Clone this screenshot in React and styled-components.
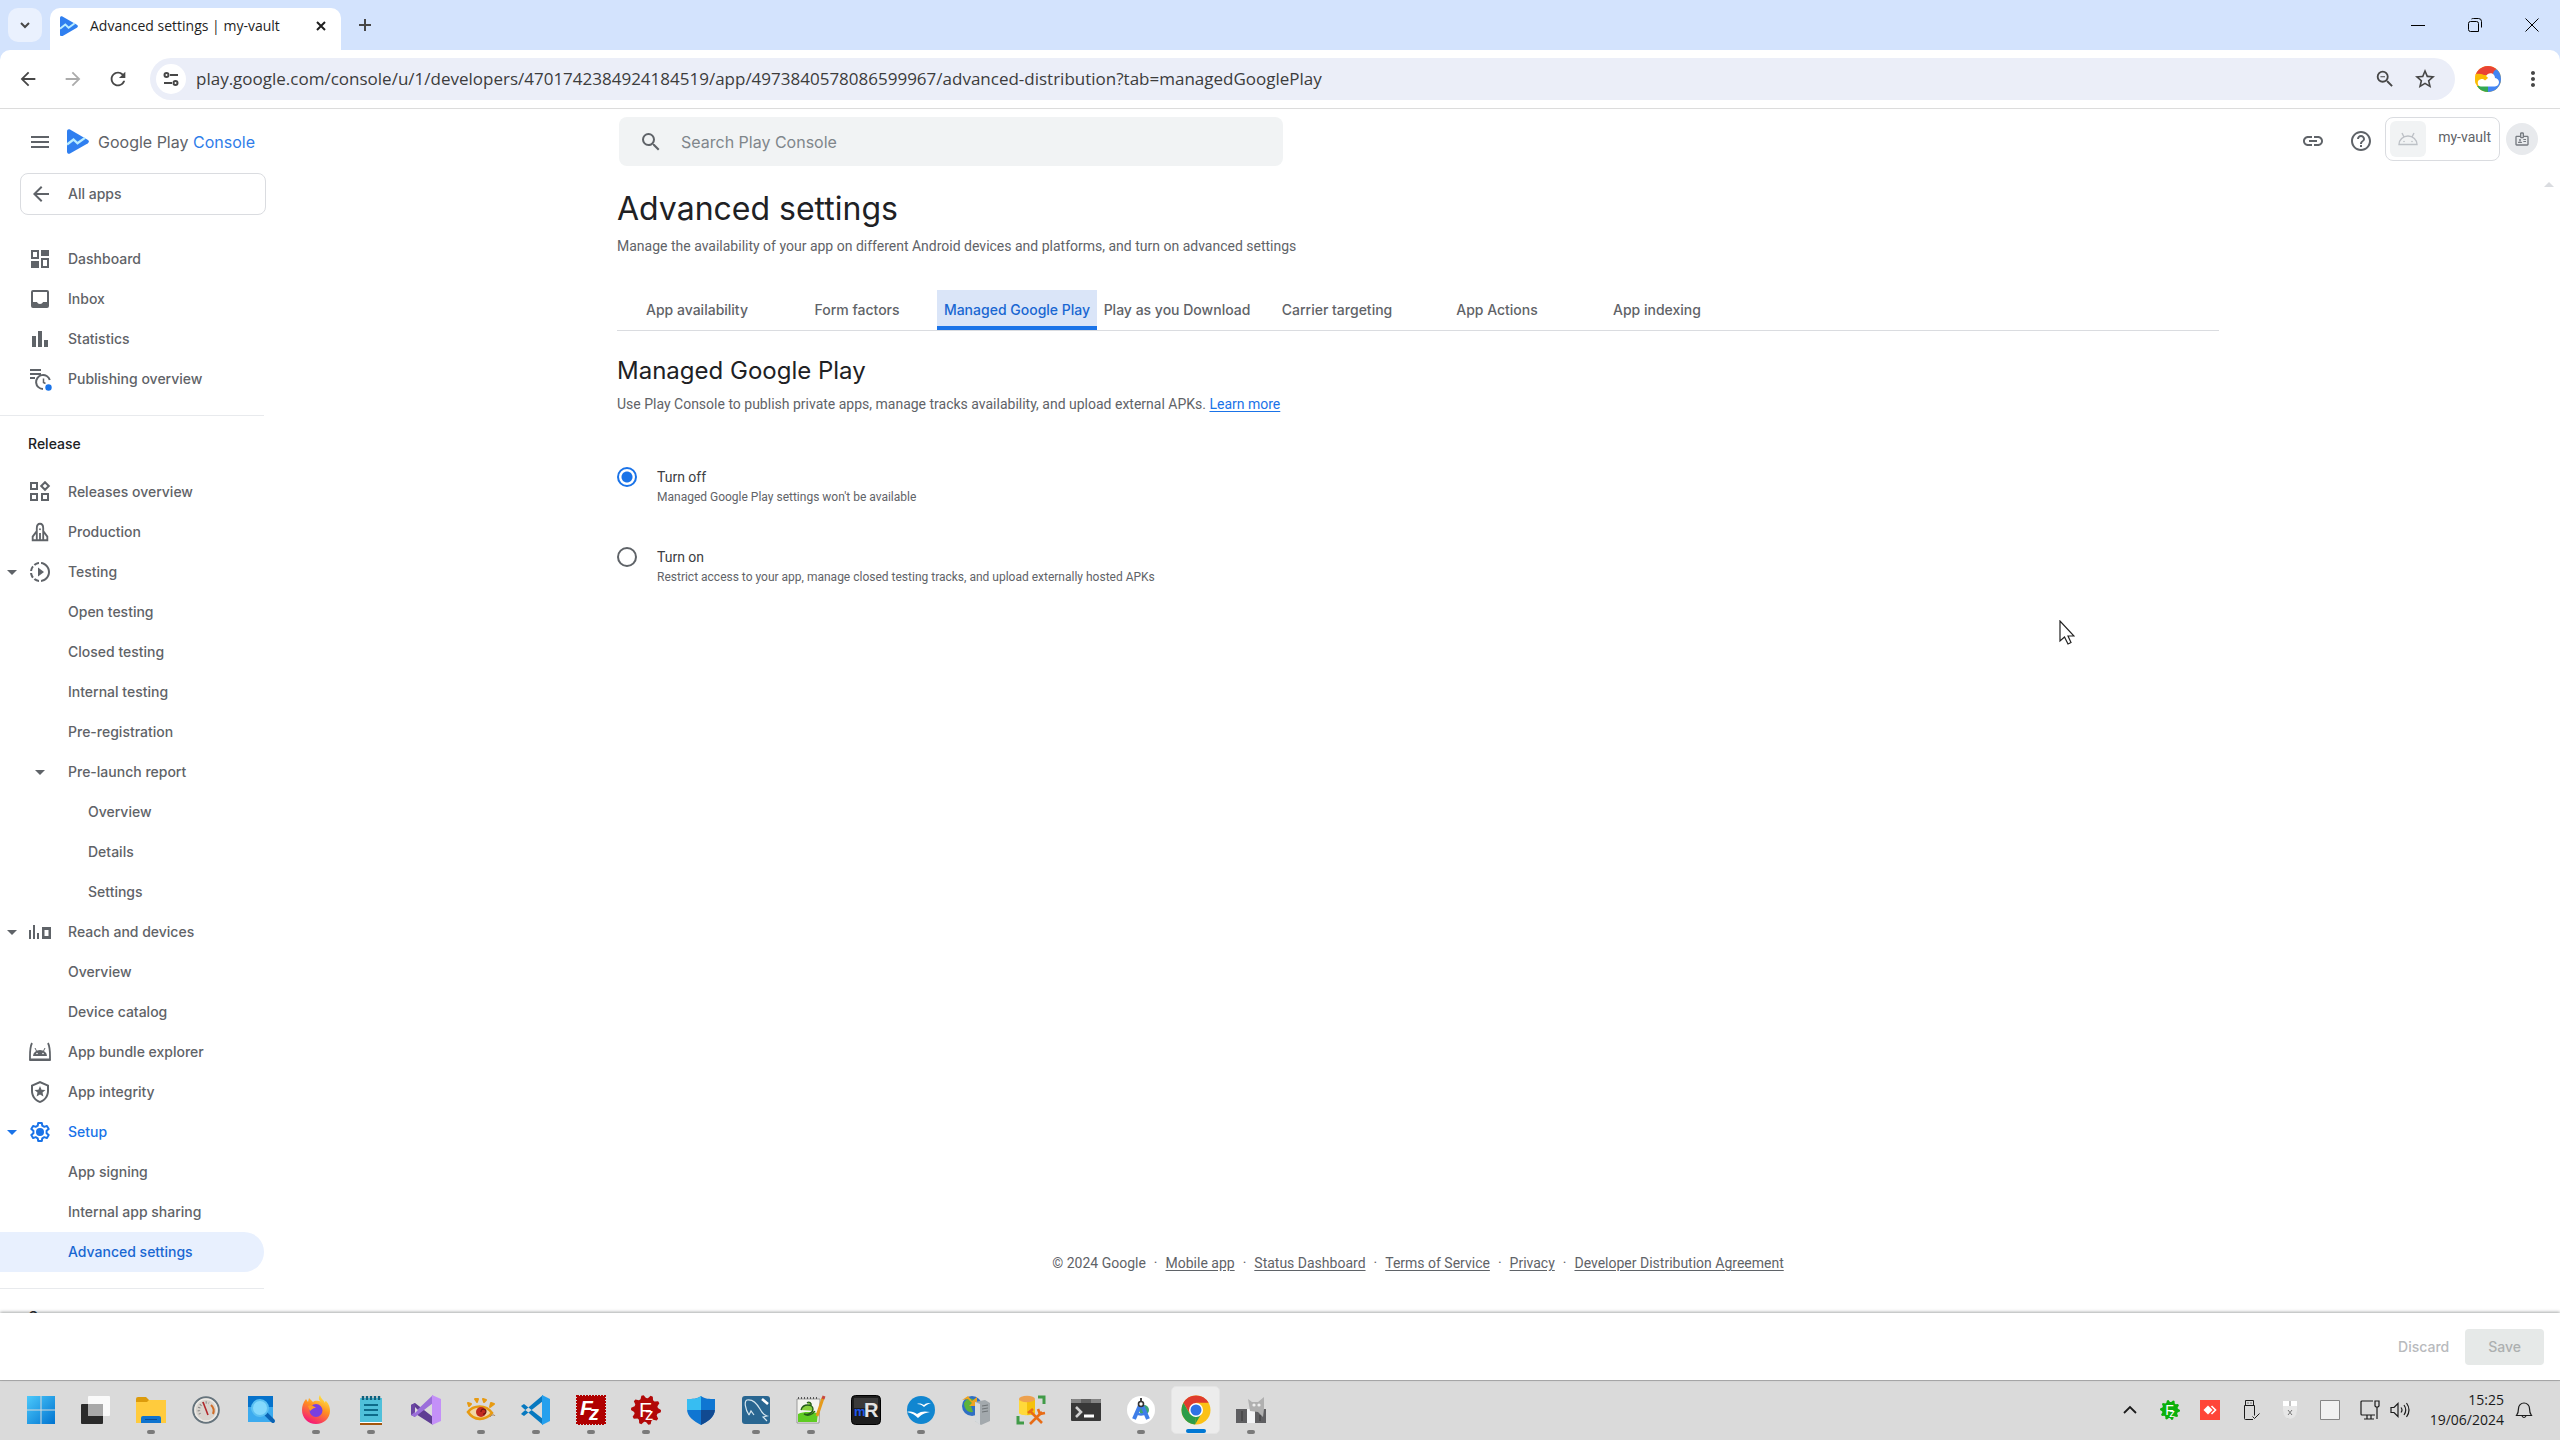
import React, { useState } from 'react';
import styled, { createGlobalStyle, css } from 'styled-components';
import {
  MdArrowBack,
  MdArrowDropDown,
  MdArrowForward,
  MdHelpOutline,
  MdLink,
  MdMenu,
  MdMoreVert,
  MdOutlineBadge,
  MdOutlineLocalPolice,
  MdOutlineSlowMotionVideo,
  MdRefresh,
  MdSearch,
  MdStarOutline,
  MdZoomOut,
} from 'react-icons/md';

const GlobalStyle = createGlobalStyle`
  * {
    box-sizing: border-box;
  }

  body {
    margin: 0;
    background: #fff;
    color: #5f6368;
    font-family: Roboto, "Liberation Sans", sans-serif;
    font-size: 14px;
    line-height: 20px;
  }

  button,
  input {
    font: inherit;
  }

  svg {
    display: block;
    flex: none;
  }
`;

const productFont = css`
  font-family: Inter, "Liberation Sans", sans-serif;
`;

const systemFont = css`
  font-family: "Open Sans", "Noto Sans", sans-serif;
`;

const Screen = styled.div`
  display: flex;
  flex-direction: column;
  height: 100vh;
  overflow: hidden;
`;

const IconButton = styled.button`
  display: flex;
  align-items: center;
  justify-content: center;
  width: ${(props) => props.$size || 32}px;
  height: ${(props) => props.$size || 32}px;
  padding: 0;
  border: none;
  border-radius: ${(props) => props.$radius || '50%'};
  background: ${(props) => props.$bg || 'transparent'};
  color: ${(props) => props.$color || '#474747'};
  cursor: pointer;
`;

/* ---------- browser ---------- */

const TabStrip = styled.div`
  display: flex;
  align-items: flex-end;
  height: 50px;
  padding-left: 8px;
  background: #d3e3fd;
`;

const TabSearch = styled(IconButton)`
  margin-bottom: 8px;
`;

const BrowserTab = styled.div`
  display: flex;
  align-items: center;
  width: 291px;
  height: 42px;
  margin-left: 8px;
  padding: 0 6px 6px 10px;
  border-radius: 10px 10px 0 0;
  background: #fff;
  color: #1f1f1f;
  ${systemFont}
`;

const TabTitle = styled.span`
  flex: 1;
  margin-left: 12px;
  white-space: nowrap;
`;

const NewTab = styled(IconButton)`
  margin: 0 auto 9px 8px;
`;

const WindowButton = styled.button`
  display: flex;
  align-items: center;
  justify-content: center;
  width: 57px;
  height: 50px;
  padding: 0;
  border: none;
  background: none;
`;

const Toolbar = styled.div`
  background: #d3e3fd;
`;

const ToolbarInner = styled.div`
  display: flex;
  align-items: center;
  height: 59px;
  padding: 0 11px;
  border-bottom: 1px solid #dcdcdc;
  border-radius: 10px 10px 0 0;
  background: #fff;
`;

const NavButtons = styled.div`
  display: flex;
  gap: 11px;
  margin-right: 15px;
`;

const Omnibox = styled.div`
  display: flex;
  flex: 1;
  align-items: center;
  height: 42px;
  padding: 0 14px 0 6px;
  border-radius: 21px;
  background: #ebeef8;
`;

const UrlInput = styled.input`
  flex: 1;
  min-width: 0;
  margin-left: 10px;
  padding: 0;
  border: none;
  outline: none;
  background: none;
  color: #3c3c3c;
  font-size: 17px;
  ${systemFont}
`;

const OmniboxActions = styled.div`
  display: flex;
  gap: 8px;
`;

const ProfileArea = styled.div`
  display: flex;
  align-items: center;
  gap: 16px;
  margin-left: 20px;
`;

/* ---------- console ---------- */

const ConsoleHeader = styled.header`
  display: grid;
  grid-template-columns: 280px 1fr;
  height: 64px;
`;

const Brand = styled.div`
  display: flex;
  align-items: center;
  padding-left: 24px;
  color: #5f6368;
  font-size: 16px;
  ${productFont}

  span {
    color: #2f7de9;
  }
`;

const MenuButton = styled(IconButton)`
  margin-right: 11px;
`;

const BrandText = styled.div`
  margin-left: 9px;
  white-space: nowrap;
`;

const HeaderMain = styled.div`
  display: grid;
  grid-template-columns: 1fr minmax(0, 1602px) 1fr;
  padding-right: 4px;
`;

const SearchBox = styled.label`
  display: flex;
  grid-column: 2;
  align-items: center;
  width: 664px;
  max-width: 100%;
  height: 49px;
  margin: 8px 2px;
  padding: 0 20px;
  border-radius: 8px;
  background: #f1f3f4;
`;

const SearchInput = styled.input`
  flex: 1;
  margin-left: 18px;
  padding: 0;
  border: none;
  outline: none;
  background: none;
  font-size: 16px;
  ${productFont}

  &::placeholder {
    color: #80868b;
    opacity: 1;
  }
`;

const HeaderActions = styled.div`
  display: flex;
  align-items: center;
  justify-content: flex-end;
  padding: 0 18px 6px 0;
`;

const HeaderTools = styled.div`
  display: flex;
  gap: 16px;
  margin-right: 8px;
  padding-top: 4px;
`;

const AppChip = styled.button`
  display: flex;
  align-items: center;
  gap: 12px;
  height: 44px;
  margin-right: 6px;
  padding: 0 8px 0 4px;
  border: 1px solid #dadce0;
  border-radius: 8px;
  background: #fff;
  color: #5f6368;
`;

const AppName = styled.span`
  padding-bottom: 4px;
`;

const AppThumb = styled.span`
  display: flex;
  align-items: center;
  justify-content: center;
  width: 36px;
  height: 36px;
  border-radius: 6px;
  background: #f1f3f4;
  color: #bdc1c6;
`;

const Body = styled.div`
  position: relative;
  display: grid;
  flex: 1;
  grid-template-columns: 280px 1fr;
  min-height: 0;
`;

const Sidebar = styled.nav`
  overflow: hidden;
  font-weight: 500;
  ${productFont}
`;

const AllApps = styled.a`
  display: flex;
  align-items: center;
  gap: 15px;
  height: 42px;
  margin: 0 14px 24px 20px;
  padding-left: 8px;
  border: 1px solid #dadce0;
  border-radius: 8px;
  color: #5f6368;
  text-decoration: none;
`;

const NavList = styled.ul`
  margin: 0 16px 16px 0;
  padding: 0;
  list-style: none;
`;

const NavLink = styled.a`
  display: grid;
  grid-template-columns: 24px 32px 1fr;
  align-items: center;
  height: 40px;
  border-radius: 0 20px 20px 0;
  background: ${(props) => (props.$current ? '#e8f0fe' : 'transparent')};
  color: ${(props) => (props.$active ? '#1a73e8' : props.$current ? '#1967d2' : '#5f6368')};
  text-decoration: none;
  white-space: nowrap;
`;

const NavSlot = styled.span`
  display: flex;
  justify-content: center;
`;

const NavText = styled.span`
  padding-left: ${(props) => (props.$deep ? 32 : 12)}px;
`;

const NavSection = styled.h3`
  margin: 0 16px 8px 0;
  padding: 8px 0 0 28px;
  border-top: 1px solid #e8eaed;
  color: #202124;
  font-size: 14px;
  font-weight: 500;
  line-height: 40px;
`;

const Main = styled.main`
  display: flex;
  flex-direction: column;
  align-items: center;
  padding: 16px 4px 40px 0;
`;

const Content = styled.div`
  flex: 1;
  width: 100%;
  max-width: 1602px;
`;

const Title = styled.h1`
  margin: 0 0 7px;
  color: #202124;
  font-size: 32px;
  font-weight: 400;
  line-height: 40px;
  ${productFont}
`;

const Subtitle = styled.h2`
  margin: 24px 0 7px;
  color: #202124;
  font-size: 24px;
  font-weight: 400;
  line-height: 32px;
  ${productFont}
`;

const Text = styled.p`
  margin: 0;
`;

const Link = styled.a`
  color: ${(props) => props.$color || '#1a73e8'};
  text-decoration: underline;
  text-underline-offset: 2px;
`;

const Tabs = styled.div`
  display: flex;
  margin-top: 34px;
  border-bottom: 1px solid #dadce0;
`;

const Tab = styled.button`
  width: 160px;
  height: 40px;
  padding: 4px 0 0;
  border: none;
  border-bottom: 4px solid ${(props) => (props.$selected ? '#1a73e8' : 'transparent')};
  background: ${(props) => (props.$selected ? '#dae5f8' : 'transparent')};
  color: ${(props) => (props.$selected ? '#1967d2' : '#5f6368')};
  font-weight: 500;
  white-space: nowrap;
  cursor: pointer;
  ${productFont}
`;

const RadioGroup = styled.div`
  display: grid;
  gap: 40px;
  margin-top: 53px;
`;

const RadioRow = styled.label`
  display: grid;
  grid-template-columns: 20px 1fr;
  column-gap: 20px;
  color: #3c4043;
  cursor: pointer;
`;

const Radio = styled.input`
  width: 20px;
  height: 20px;
  margin: 0;
  border: 2px solid #5f6368;
  border-radius: 50%;
  appearance: none;

  &:checked {
    border-color: #1a73e8;
    background: radial-gradient(circle, #1a73e8 5px, transparent 6px);
  }
`;

const RadioHint = styled.span`
  grid-column: 2;
  color: #5f6368;
  font-size: 12px;
`;

const Footer = styled.footer`
  display: flex;
  gap: 8px;
`;

const ScrollArrow = styled.span`
  position: absolute;
  top: 9px;
  right: 6px;
  border: 5px solid transparent;
  border-top: none;
  border-bottom-color: #dadce0;
`;

const ActionBar = styled.div`
  z-index: 1;
  display: flex;
  align-items: center;
  justify-content: flex-end;
  gap: 16px;
  height: 67px;
  padding-right: 16px;
  background: #fff;
  box-shadow: 0 -1px 3px rgba(60, 64, 67, 0.45);
`;

const ActionButton = styled.button`
  height: 36px;
  padding: 0 ${(props) => (props.$filled ? 23 : 0)}px;
  border: none;
  border-radius: 4px;
  background: ${(props) => (props.$filled ? '#e6e9e8' : 'transparent')};
  color: ${(props) => (props.$filled ? '#adb0b0' : '#b8babd')};
  font-weight: 500;
  ${productFont}
`;

const MouseCursor = styled.svg`
  position: absolute;
  top: 447px;
  left: 2059px;
`;

/* ---------- taskbar ---------- */

const TaskbarRow = styled.div`
  display: flex;
  align-items: center;
  justify-content: space-between;
  height: 60px;
  padding: 0 27px 2px 13px;
  border-top: 1px solid #aeaeae;
  background: #dadada;
  color: #1b1b1b;
`;

const TaskApps = styled.div`
  display: flex;
`;

const TaskButton = styled.button`
  position: relative;
  display: flex;
  align-items: center;
  justify-content: center;
  width: 49px;
  height: 48px;
  margin: 0 3px;
  padding: 0;
  border: ${(props) => (props.$active ? '1px solid #e4e4e4' : 'none')};
  border-radius: 5px;
  background: ${(props) => (props.$active ? '#ececec' : 'transparent')};

  &::after {
    content: '';
    position: absolute;
    bottom: 0;
    width: ${(props) => (props.$active ? 20 : 8)}px;
    height: 4px;
    border-radius: 2px;
    background: ${(props) => (props.$active ? '#0078d4' : props.$open ? '#7a7a7a' : 'transparent')};
  }
`;

const Tray = styled.div`
  display: flex;
  align-items: center;
  gap: 20px;
`;

const TrayPair = styled.div`
  display: flex;
  gap: 10px;
`;

const Clock = styled.div`
  text-align: right;
  ${systemFont}
`;

const TrayEnd = styled.div`
  display: flex;
  align-items: center;
  gap: 11px;
`;

/* ---------- drawings ---------- */

const PlayLogo = ({ size }) => (
  <svg width={size} height={size * 25 / 22} viewBox="0 0 22 25">
    <path d="M0 2.2C0 .5 1.6-.3 3 .5l17.6 10.2c1.7 1 1.7 2.7 0 3.7L3 24.600C1.600 25.300 0 24.500 0 22.800z" fill="#2f7ff0" />
    <path d="M0 15.500l6.500-5 4 3.800 7.500-5.400" fill="none" stroke="#b9edff" strokeWidth="2.400" />
  </svg>
);

const Stroke = ({ d, size = 24, width = 2, box = 24, children }) => (
  <svg width={size} height={size} viewBox={`0 0 ${box} ${box}`} fill="none" stroke="currentColor" strokeWidth={width}>
    <path d={d} />
    {children}
  </svg>
);

const ICONS = {
  dashboard: (
    <svg width="20" height="20" viewBox="0 0 20 20" fill="none" stroke="currentColor" strokeWidth="2">
      <path d="M2 2h6v7H2zM12 10h6v8h-6z" />
      <path d="M11 1h8v6h-8zM1 12h8v7H1z" fill="currentColor" stroke="none" />
    </svg>
  ),
  inbox: (
    <svg width="20" height="20" viewBox="0 0 20 20">
      <path
        d="M3 1h14a2 2 0 012 2v14a2 2 0 01-2 2H3a2 2 0 01-2-2V3a2 2 0 012-2zm0 2v10h4c.4 1.200 1.600 2 3 2s2.600-.8 3-2h4V3z"
        fill="currentColor"
      />
    </svg>
  ),
  statistics: (
    <svg width="18" height="18" viewBox="0 0 18 18" fill="currentColor">
      <path d="M1 6h4v11H1zM7 1h4v16H7zM13 10h4v7h-4z" />
    </svg>
  ),
  publishing: (
    <svg width="24" height="24" viewBox="0 0 24 24" fill="none" stroke="currentColor" strokeWidth="2">
      <path d="M2 3h11M2 7h11M2 11h5" />
      <path d="M21.800 13A7 7 0 1 0 15 22" />
      <path d="M15.500 11.500v4l2 1" strokeWidth="1.500" />
      <circle cx="20.500" cy="20.500" r="3.200" fill="#1a73e8" stroke="none" />
    </svg>
  ),
  releases: (
    <Stroke size={22} box={22} d="M2 2h6v6H2zM2 13h6v6H2zM13 13h6v6h-6zM16 1.200L19.800 5 16 8.800 12.200 5z" />
  ),
  production: (
    <Stroke size={22} box={24} d="M8.500 21V8c0-3 1.500-5 3.500-5s3.500 2 3.500 5v13M8.500 11L4 17v4h16v-4l-4.500-6">
      <path d="M12 13v8" />
      <circle cx="12" cy="9" r="1" fill="currentColor" stroke="none" />
    </Stroke>
  ),
  testing: <MdOutlineSlowMotionVideo size={24} />,
  reach: (
    <svg width="22" height="22" viewBox="0 0 22 22" fill="currentColor">
      <path d="M0 9h2v9H0zM4 4h2v14H4zM8 12h2v6H8zM13 6h9v12h-9zm2.500 3v6h4V9z" fillRule="evenodd" />
    </svg>
  ),
  bundle: (
    <svg width="24" height="24" viewBox="0 0 24 24" fill="none" stroke="currentColor">
      <path d="M4 3C1.500 8 2 14 2 19.500h20C22 14 22.500 8 20 3" strokeWidth="1.800" />
      <path d="M1.500 19h21v2h-21z" fill="currentColor" stroke="none" />
      <path d="M5 16a7 6 0 0114 0z" fill="currentColor" stroke="none" />
      <path d="M7 8l1.500 3M17 8l-1.500 3" />
      <circle cx="9" cy="13.500" r=".8" fill="#fff" stroke="none" />
      <circle cx="15" cy="13.500" r=".8" fill="#fff" stroke="none" />
    </svg>
  ),
  integrity: <MdOutlineLocalPolice size={24} />,
  setup: (
    <svg width="24" height="24" viewBox="0 0 24 24" fill="none" stroke="currentColor" strokeWidth="2" strokeLinejoin="round">
      <path d="M10.200 3h3.600l.5 2.700 2 1.150 2.600-.95 1.800 3.100-2.100 1.800v2.400l2.100 1.800-1.800 3.100-2.600-.95-2 1.150-.5 2.700h-3.600l-.5-2.700-2-1.150-2.600.95L3.300 15l2.100-1.800v-2.400L3.300 9l1.800-3.100 2.600.95 2-1.150z" />
      <circle cx="12" cy="12" r="4" fill="currentColor" stroke="none" />
    </svg>
  ),
};

const AndroidHead = () => (
  <svg width="20" height="14" viewBox="0 0 20 14" fill="none" stroke="currentColor" strokeWidth="1.400">
    <path d="M1 12.500a9 8.500 0 0118 0z" />
    <path d="M4 1l2 4M16 1l-2 4" />
    <circle cx="6" cy="9.500" r=".8" fill="currentColor" stroke="none" />
    <circle cx="14" cy="9.500" r=".8" fill="currentColor" stroke="none" />
  </svg>
);

const CloudAvatar = () => (
  <svg width="26" height="26" viewBox="0 0 26 26">
    <defs>
      <clipPath id="cloudClip">
        <circle cx="13" cy="13" r="13" />
      </clipPath>
    </defs>
    <g clipPath="url(#cloudClip)">
      <path d="M0 0h26v26H0z" fill="#fbbc04" />
      <path d="M0 0h22l-3 9H0z" fill="#ea4335" />
      <path d="M19 5l7-5v26H13v-6z" fill="#4285f4" />
      <path d="M0 20h13v6H0z" fill="#34a853" />
      <path d="M0 8c5-1 10 0 12 4l-4 6H0z" fill="#fbbc04" />
      <path d="M6 20.500a3.700 3.700 0 01-.3-7.300c1.500-.2 2.800-.2 4.300 1.300l3-2.500c-1-1.500-2-1.700-2-1.700C13 5.500 20 6.500 20 12c2.500.3 4 2 4 4.300 0 2.200-1.700 4.200-4 4.200z" fill="#fff" />
    </g>
  </svg>
);

const gear = (cx, cy, r, teeth) => {
  const points = [];
  for (let i = 0; i < teeth * 4; i += 1) {
    const radius = i % 4 < 2 ? r : r - 3;
    const angle = (i / (teeth * 4)) * Math.PI * 2;
    points.push(`${cx + radius * Math.cos(angle)},${cy + radius * Math.sin(angle)}`);
  }
  return points.join(' ');
};

const AppSvg = ({ size = 30, children }) => (
  <svg width={size} height={size} viewBox="0 0 30 30">
    {children}
  </svg>
);

const ServerGear = ({ size, fill }) => (
  <AppSvg size={size}>
    <polygon points={gear(15, 15, 15, 10)} fill={fill} />
    <g fill="#fff" fontFamily="Liberation Sans">
      <text x="8" y="22" fontSize="21">F</text>
      <text x="14" y="25" fontSize="17">z</text>
    </g>
  </AppSvg>
);

const TASKS = [
  {
    name: 'Start',
    icon: (
      <AppSvg>
        <defs>
          <linearGradient id="win" x1="0" y1="0" x2="1" y2="1">
            <stop offset="0" stopColor="#4cc9fb" />
            <stop offset="1" stopColor="#0073d0" />
          </linearGradient>
        </defs>
        <path d="M1 1h13.500v13.500H1zM15.500 1H29v13.500H15.500zM1 15.500h13.500V29H1zM15.500 15.500H29V29H15.500z" fill="url(#win)" />
      </AppSvg>
    ),
  },
  {
    name: 'Task view',
    icon: (
      <AppSvg>
        <rect x="0" y="9" width="22" height="20" rx="1" fill="#2a2a2a" />
        <rect x="7" y="1" width="22" height="20" rx="1" fill="#fafafa" />
        <path d="M7 9h15v12H7z" fill="#a9a9a9" />
      </AppSvg>
    ),
  },
  {
    name: 'File Explorer',
    open: true,
    icon: (
      <AppSvg>
        <path d="M0 4a2 2 0 012-2h8l3 3v3H0z" fill="#dc9b0c" />
        <path d="M0 7h11l2-2h17v23H0z" fill="#ffcb3d" />
        <path d="M5 28v-5a2 2 0 012-2h16a2 2 0 012 2v5z" fill="#0f74cf" />
        <path d="M9 24.500h12" stroke="#0a4c94" />
      </AppSvg>
    ),
  },
  {
    name: 'Performance',
    icon: (
      <AppSvg>
        <circle cx="15" cy="15" r="12.800" fill="#d9d4ce" stroke="#66747d" strokeWidth="2" />
        <circle cx="15" cy="15" r="11" fill="none" stroke="#eceae6" strokeWidth="1.500" />
        <path d="M9 19a7.500 7.500 0 019-11" fill="none" stroke="#888" strokeWidth="2.500" strokeDasharray="1 2" />
        <path d="M20 10a8 8 0 012 9" fill="none" stroke="#d06c26" strokeWidth="2" />
        <path d="M12 7l5 13" stroke="#b3272b" strokeWidth="1.600" />
      </AppSvg>
    ),
  },
  {
    name: 'Search',
    icon: (
      <AppSvg>
        <path d="M2 1h25v26H2z" fill="#3cabef" />
        <path d="M2 1h25v11H2z" fill="#0672cb" />
        <path d="M20 19l7 7" stroke="#0a63b4" strokeWidth="4" strokeLinecap="round" />
        <circle cx="14" cy="13" r="8" fill="#84d9fd" stroke="#5bc0f2" strokeWidth="2" />
      </AppSvg>
    ),
  },
  {
    name: 'Firefox',
    open: true,
    icon: (
      <AppSvg>
        <defs>
          <linearGradient id="fox" x1=".8" y1="0" x2=".3" y2="1">
            <stop offset="0" stopColor="#fff04a" />
            <stop offset=".45" stopColor="#ff9020" />
            <stop offset="1" stopColor="#f5117d" />
          </linearGradient>
        </defs>
        <path d="M19 0c-2 3-1 5 1 7-3-2-7-1-8 0l-4-4-1 4-2-3C2 8 1 11 1 15c0 8 6 14 14 14s14-6 14-13c0-4-1-7-4-10-1 0-1 1-1 2-1-3-4-4-5-8z" fill="url(#fox)" />
        <circle cx="15" cy="15.500" r="6.500" fill="#7a3fe0" />
        <path d="M7 11c3-2 6 0 8 2-4 0-4 2-6 3z" fill="#ff9a26" />
      </AppSvg>
    ),
  },
  {
    name: 'Notepad',
    open: true,
    icon: (
      <AppSvg>
        <path d="M4 3h22v24H4z" fill="#4fc0da" />
        <path d="M7 1v4M11 1v4M15 1v4M19 1v4M23 1v4" stroke="#10627e" strokeWidth="2.400" />
        <path d="M8 10h14M8 15h14M8 20h14" stroke="#0d6b8a" strokeWidth="2" />
        <path d="M4 27h22v1H4z" fill="#fff" />
        <path d="M4 28h22v2H4z" fill="#a4560d" />
      </AppSvg>
    ),
  },
  {
    name: 'Visual Studio',
    icon: (
      <AppSvg>
        <path d="M0 10l4-2 18 14v8L4 18.500v-7L0 19z" fill="#5f3d94" />
        <path d="M0 10l4-2v14l-4-2z" fill="#6b46a3" />
        <path d="M0 20l4 2L22 8V0L4 17z" fill="#9b6fda" />
        <path d="M21 0l9 4v22l-9 4z" fill="#c490f8" />
        <path d="M4 12l3 3-3 3zM21 10v10l-6-5z" fill="#dadada" />
      </AppSvg>
    ),
  },
  {
    name: 'XnView',
    open: true,
    icon: (
      <AppSvg>
        <path d="M2 17c5-7 18-8 24 1-7 8-18 8-24-1z" fill="#f1d7a6" stroke="#e79a12" strokeWidth="2.600" />
        <circle cx="15" cy="17" r="5" fill="#c22a20" />
        <path d="M15 17a2.500 2.500 0 112 2" fill="none" stroke="#6d1410" strokeWidth="1.200" />
        <path d="M2 8l3 1-2 2zM9 4l3 0-1 3zM17 4l3 1-2 2zM25 8l3 1-4 3z" fill="#e79a12" stroke="#e79a12" strokeLinejoin="round" strokeWidth="2" />
        <path d="M24 22c1-2 4-3 5-1" fill="none" stroke="#a2784a" />
      </AppSvg>
    ),
  },
  {
    name: 'Visual Studio Code',
    open: true,
    icon: (
      <AppSvg>
        <path d="M0 11l3-2 19 15v6L2 13zM0 19l3 2L22 6V0L2 17z" fill="#0779c0" />
        <path d="M21 0l8 4v22l-8 4z" fill="#25a0ee" />
      </AppSvg>
    ),
  },
  {
    name: 'FileZilla',
    open: true,
    icon: (
      <AppSvg>
        <path d="M1 1h28v28H1z" fill="#b00000" stroke="#b00000" strokeWidth="2" strokeDasharray="2 1" />
        <g fill="#fff" fontFamily="Liberation Sans" fontWeight="700" fontStyle="italic">
          <text x="4" y="20" fontSize="21">F</text>
          <text x="13" y="25" fontSize="20">z</text>
        </g>
      </AppSvg>
    ),
  },
  {
    name: 'FileZilla Server',
    open: true,
    icon: <ServerGear fill="#b20808" />,
  },
  {
    name: 'Windows Security',
    icon: (
      <AppSvg>
        <path d="M15 1c4 3 8 3 14 3v10c0 8-7 12-14 16C8 26 1 22 1 14V4c6 0 10 0 14-3z" fill="#0f76d2" />
        <path d="M15 1v14H1V4c6 0 10 0 14-3z" fill="#37bdf2" />
        <path d="M15 15h14c-1 8-8 12-14 15z" fill="#114a91" />
      </AppSvg>
    ),
  },
  {
    name: 'MySQL Workbench',
    open: true,
    icon: (
      <AppSvg>
        <rect x="1" y="1" width="28" height="28" rx="3" fill="#296691" />
        <path d="M8 20C4 14 3 6 6 5c5-1 9 2 13 9 2 4 4 6 7 7l-4 1 4 4M8 20l2-4 3 4" fill="none" stroke="#d5e6ef" strokeWidth="1.200" />
        <path d="M21 4l6 5" stroke="#fff" strokeWidth="2.600" />
      </AppSvg>
    ),
  },
  {
    name: 'Notepad++',
    open: true,
    icon: (
      <AppSvg>
        <path d="M1 4h23l-1 24H1z" fill="#f4f4f0" stroke="#888" strokeWidth=".8" />
        <path d="M2 19c6-3 14-2 20-1l-1 9H2z" fill="#5fcc22" />
        <path d="M5 15c2-7 12-6 12-1 0 4-5 6-9 5 4 3 9 0 11-3M11 8c2-2 5 0 4 3" fill="#87cf3c" stroke="#245c18" strokeWidth="1.300" />
        <path d="M2 3h21" stroke="#555" strokeWidth="2" strokeDasharray="1 2" />
        <path d="M27 3l-6 18" stroke="#e59a1b" strokeWidth="3" />
        <path d="M28 1l-1 3" stroke="#c84a3f" strokeWidth="3" />
      </AppSvg>
    ),
  },
  {
    name: 'mRemoteNG',
    icon: (
      <AppSvg>
        <rect x=".5" y=".5" width="29" height="29" rx="4" fill="#1d1d1d" stroke="#000" />
        <path d="M3 3h24v10H3z" fill="#3a3a3a" />
        <g fontFamily="Liberation Sans" fontWeight="700">
          <text x="3" y="21" fontSize="13" fill="#1f57ee">m</text>
          <text x="13" y="22" fontSize="20" fill="#e3e3e3">R</text>
        </g>
      </AppSvg>
    ),
  },
  {
    name: 'OpenOffice',
    open: true,
    icon: (
      <AppSvg>
        <circle cx="15" cy="15" r="14" fill="#1186d0" />
        <path d="M11 9c3-1 5 0 7 1 2-2 4-2 7-2-3 1-5 2-7 4-2-2-4-3-7-3zM1 17c4-1 7 0 10 2 4-3 8-3 13-2-6 1-9 3-12 6-3-3-6-5-11-6z" fill="#fff" />
      </AppSvg>
    ),
  },
  {
    name: 'Site manager',
    icon: (
      <AppSvg>
        <circle cx="11" cy="11" r="10" fill="#2f6fc4" />
        <path d="M3 8c3-6 8-5 10-3l-3 6 2 6c-5 1-9-3-9-9z" fill="#5db33a" />
        <path d="M1 5l6-4 4 5 5-4v9h-8l3-3-4-4z" fill="#efa41f" />
        <path d="M14 7l10-2 5 3v18l-9 4-6-4z" fill="#a3a9ad" />
        <path d="M14 7l5 2v21l-5-4z" fill="#d7dadc" />
        <path d="M21 11l6-1M21 14l6-1M21 17l6-1" stroke="#6f7477" />
      </AppSvg>
    ),
  },
  {
    name: 'SQL tools',
    icon: (
      <AppSvg>
        <path d="M3 4v14c0 3 16 3 16 0V4z" fill="#ffd93a" />
        <path d="M11 5h8v13c0 1-3 2-8 2z" fill="#f5c20b" />
        <ellipse cx="11" cy="4" rx="8" ry="3.200" fill="#eda14f" />
        <path d="M22 2h6v7M2 21v7h6" fill="none" stroke="#419b48" strokeWidth="3" />
        <path d="M14 16l12 12M26 17L14 29" stroke="#e86c16" strokeWidth="2.600" />
        <path d="M12 18l5-4M22 14l2 5 5-1" fill="none" stroke="#e86c16" strokeWidth="2.600" />
      </AppSvg>
    ),
  },
  {
    name: 'Terminal',
    icon: (
      <AppSvg>
        <rect x="0" y="4" width="30" height="22" rx="1" fill="#383838" />
        <path d="M1 4h9v4H0V5zM20 4h9l1 1v3H20z" fill="#858585" />
        <path d="M10 4h10v4H10z" fill="#606060" />
        <path d="M5 12l5 5-5 5" fill="none" stroke="#d0d0d0" strokeWidth="2.600" />
        <path d="M13 21h10" stroke="#fff" strokeWidth="3" />
      </AppSvg>
    ),
  },
  {
    name: 'Android Studio',
    open: true,
    icon: (
      <AppSvg>
        <circle cx="15" cy="15" r="14" fill="#fff" />
        <circle cx="18" cy="15" r="5" fill="#3ba574" />
        <path d="M15 8l-7 16M15 8l7 16" stroke="#3f7ee8" strokeWidth="4" />
        <path d="M10 18q5 3 10 0" fill="none" stroke="#3f7ee8" strokeWidth="2.600" />
        <path d="M15 3v3" stroke="#444" strokeWidth="2" />
        <circle cx="15" cy="9" r="2.500" fill="#fff" stroke="#333" strokeWidth="1.600" />
      </AppSvg>
    ),
  },
  {
    name: 'Google Chrome',
    active: true,
    icon: (
      <AppSvg>
        <circle cx="15" cy="15" r="14.500" fill="#fbc116" />
        <path d="M2.400 7.800A14.500 14.500 0 0127.600 7.800H15L8.800 18.500z" fill="#df3b2d" />
        <path d="M2.400 7.800l6.300 10.900L15 22.200l-1 7.300A14.500 14.500 0 012.400 7.800z" fill="#2c9c48" />
        <path d="M14 29.500l6.500-11-5.500 3z" fill="#2c9c48" />
        <circle cx="15" cy="15" r="7" fill="#fff" />
        <circle cx="15" cy="15" r="5.500" fill="#2f72e4" />
      </AppSvg>
    ),
  },
  {
    name: 'GIMP',
    open: true,
    icon: (
      <AppSvg>
        <path d="M0 14h30v14H0z" fill="#5e5e61" />
        <path d="M11 14h8v14h-8z" fill="#f3f4f6" />
        <path d="M12 4l4 3h6l6-5v12l-1 8-5-5-8-1z" fill="#b0b0b0" />
        <path d="M6 16v10M24 20v6" stroke="#38383a" />
        <circle cx="18" cy="10" r="1.600" fill="#eee" />
        <circle cx="23" cy="10" r="1.600" fill="#eee" />
      </AppSvg>
    ),
  },
];

/* ---------- data ---------- */

const TOP_NAV = [
  { label: 'Dashboard', icon: 'dashboard' },
  { label: 'Inbox', icon: 'inbox' },
  { label: 'Statistics', icon: 'statistics' },
  { label: 'Publishing overview', icon: 'publishing' },
];

const RELEASE_NAV = [
  { label: 'Releases overview', icon: 'releases' },
  { label: 'Production', icon: 'production' },
  { label: 'Testing', icon: 'testing', caret: true },
  { label: 'Open testing' },
  { label: 'Closed testing' },
  { label: 'Internal testing' },
  { label: 'Pre-registration' },
  { label: 'Pre-launch report', innerCaret: true },
  { label: 'Overview', deep: true },
  { label: 'Details', deep: true },
  { label: 'Settings', deep: true },
  { label: 'Reach and devices', icon: 'reach', caret: true },
  { label: 'Overview' },
  { label: 'Device catalog' },
  { label: 'App bundle explorer', icon: 'bundle' },
  { label: 'App integrity', icon: 'integrity' },
  { label: 'Setup', icon: 'setup', caret: true, active: true },
  { label: 'App signing' },
  { label: 'Internal app sharing' },
  { label: 'Advanced settings', current: true },
];

const TABS = [
  'App availability',
  'Form factors',
  'Managed Google Play',
  'Play as you Download',
  'Carrier targeting',
  'App Actions',
  'App indexing',
];

const FOOTER_LINKS = [
  'Mobile app',
  'Status Dashboard',
  'Terms of Service',
  'Privacy',
  'Developer Distribution Agreement',
];

const OPTIONS = [
  { value: 'off', label: 'Turn off', hint: "Managed Google Play settings won't be available" },
  {
    value: 'on',
    label: 'Turn on',
    hint: 'Restrict access to your app, manage closed testing tracks, and upload externally hosted APKs',
  },
];

/* ---------- parts ---------- */

const Browser = () => (
  <>
    <TabStrip>
      <TabSearch $size={34} $radius="10px" $bg="#eaf1fe" aria-label="Search tabs">
        <Stroke size={12} box={12} d="M2 4l4 4 4-4" />
      </TabSearch>
      <BrowserTab>
        <PlayLogo size={18} />
        <TabTitle>Advanced settings | my-vault</TabTitle>
        <IconButton $size={28} $color="#1f1f1f" aria-label="Close tab">
          <Stroke size={12} box={12} d="M2 2l8 8M10 2l-8 8" />
        </IconButton>
      </BrowserTab>
      <NewTab aria-label="New tab">
        <Stroke size={14} box={14} d="M7 1v12M1 7h12" />
      </NewTab>
      <WindowButton aria-label="Minimize">
        <Stroke size={14} box={14} width={1} d="M0 7.500h14" />
      </WindowButton>
      <WindowButton aria-label="Restore">
        <Stroke size={14} box={14} width={1} d="M2.500 3.500h6a2 2 0 012 2v8h-8a2 2 0 01-2-2v-6a2 2 0 012-2zM3.500 1c1-.5 1-.5 2-.5h5a3 3 0 013 3v6" />
      </WindowButton>
      <WindowButton aria-label="Close">
        <Stroke size={14} box={14} width={1} d="M.5.500l13 13M13.500.500l-13 13" />
      </WindowButton>
    </TabStrip>
    <Toolbar>
      <ToolbarInner>
        <NavButtons>
          <IconButton aria-label="Back" $size={34}>
            <MdArrowBack size={22} />
          </IconButton>
          <IconButton aria-label="Forward" $size={34} $color="#ababab">
            <MdArrowForward size={22} />
          </IconButton>
          <IconButton aria-label="Reload" $size={34}>
            <MdRefresh size={22} />
          </IconButton>
        </NavButtons>
        <Omnibox>
          <IconButton $size={30} $bg="#fff" aria-label="Site information">
            <Stroke size={16} box={16} d="M7 4h8M1 12h8">
              <circle cx="3.500" cy="4" r="2" />
              <circle cx="12.500" cy="12" r="2" />
            </Stroke>
          </IconButton>
          <UrlInput
            aria-label="Address"
            defaultValue="play.google.com/console/u/1/developers/4701742384924184519/app/4973840578086599967/advanced-distribution?tab=managedGooglePlay"
          />
          <OmniboxActions>
            <IconButton aria-label="Zoom">
              <MdZoomOut size={22} />
            </IconButton>
            <IconButton aria-label="Bookmark">
              <MdStarOutline size={24} />
            </IconButton>
          </OmniboxActions>
        </Omnibox>
        <ProfileArea>
          <CloudAvatar />
          <IconButton aria-label="Menu">
            <MdMoreVert size={24} />
          </IconButton>
        </ProfileArea>
      </ToolbarInner>
    </Toolbar>
  </>
);

const NavItem = ({ label, icon, caret, innerCaret, deep, active, current }) => (
  <li>
    <NavLink href="#" $active={active} $current={current}>
      <NavSlot>{caret && <MdArrowDropDown size={24} />}</NavSlot>
      <NavSlot>
        {icon && ICONS[icon]}
        {innerCaret && <MdArrowDropDown size={24} />}
      </NavSlot>
      <NavText $deep={deep}>{label}</NavText>
    </NavLink>
  </li>
);

const Taskbar = () => (
  <TaskbarRow>
    <TaskApps>
      {TASKS.map(({ name, icon, open, active }) => (
        <TaskButton key={name} aria-label={name} $open={open} $active={active}>
          {icon}
        </TaskButton>
      ))}
    </TaskApps>
    <Tray>
      <Stroke size={20} box={20} d="M4 13l6-6 6 6" width={1.8} />
      <ServerGear size={20} fill="#0bb00b" />
      <svg width="20" height="20" viewBox="0 0 20 20">
        <path d="M0 0h20v20H0z" fill="#ff4538" />
        <path d="M8 5.500l4.500 4.500L8 14.500 3.500 10z" fill="#fff" />
        <path d="M11.500 6l4 4-4 4" fill="none" stroke="#fff" strokeWidth="1.600" />
      </svg>
      <Stroke size={20} box={20} width={1} d="M5.500.500h8v5h-8zM13 19.500H5.500a1 1 0 01-1-1v-13h10v10M12.500 16.500l2 2 5-5M8 2.500v1M11 2.500v1" />
      <svg width="20" height="20" viewBox="0 0 20 20">
        <path d="M3 1h14v9a7 9 0 01-14 0z" fill="#c3c3c3" />
        <path d="M3 1h6v5H3zM11 1h6v5h-6z" fill="#fff" />
        <path d="M3 6h14v5a7 8 0 01-14 0z" fill="#e6e6e6" />
        <path d="M8 10l4 5M12 10l-4 5" stroke="#777" />
      </svg>
      <svg width="20" height="20" viewBox="0 0 20 20">
        <path d="M.5.500h19v19H.5z" fill="#f0f0f0" stroke="#858585" />
      </svg>
      <TrayPair>
        <Stroke size={20} box={20} width={1.2} d="M13 1H2a1 1 0 00-1 1v12a1 1 0 001 1h13M4 19h10M7 15v4M11 15v4M15 1h4v5l-1 1h-2l-1-1zM17 7v12" />
        <Stroke size={20} box={20} width={1.2} d="M1 7.500h3l4-4v13l-4-4H1zM11 7.500q2 2.500 0 5M14 5q3.500 5 0 10M16.500 3q5 7 0 14" />
      </TrayPair>
      <TrayEnd>
        <Clock>
          <div>15:25</div>
          <div>19/06/2024</div>
        </Clock>
        <Stroke size={18} box={18} width={1.2} d="M1.500 14.500c1.500-2 2-3 2-7a5.500 5.500 0 0111 0c0 4 .5 5 2 7zM7 15q2 3 4 0" />
      </TrayEnd>
    </Tray>
  </TaskbarRow>
);

const App = () => {
  const [tab, setTab] = useState('Managed Google Play');
  const [mode, setMode] = useState('off');

  return (
    <Screen>
      <GlobalStyle />
      <Browser />

      <ConsoleHeader>
        <Brand>
          <MenuButton $size={32} $radius="4px" $color="#5f6368" aria-label="Main menu">
            <MdMenu size={24} />
          </MenuButton>
          <PlayLogo size={22} />
          <BrandText>
            Google Play <span>Console</span>
          </BrandText>
        </Brand>
        <HeaderMain>
          <SearchBox>
            <MdSearch size={24} />
            <SearchInput type="search" placeholder="Search Play Console" aria-label="Search Play Console" />
          </SearchBox>
          <HeaderActions>
            <HeaderTools>
              <IconButton $color="#5f6368" aria-label="Copy link">
                <MdLink size={24} />
              </IconButton>
              <IconButton $color="#5f6368" aria-label="Help">
                <MdHelpOutline size={24} />
              </IconButton>
            </HeaderTools>
            <AppChip>
              <AppThumb>
                <AndroidHead />
              </AppThumb>
              <AppName>my-vault</AppName>
            </AppChip>
            <IconButton $bg="#e8eaed" $color="#757a80" aria-label="Account">
              <MdOutlineBadge size={16} />
            </IconButton>
          </HeaderActions>
        </HeaderMain>
      </ConsoleHeader>

      <Body>
        <Sidebar>
          <AllApps href="#">
            <MdArrowBack size={24} />
            All apps
          </AllApps>
          <NavList>
            {TOP_NAV.map((item) => (
              <NavItem key={item.label} {...item} />
            ))}
          </NavList>
          <NavSection>Release</NavSection>
          <NavList>
            {RELEASE_NAV.map((item, index) => (
              <NavItem key={index} {...item} />
            ))}
          </NavList>
          <NavSection>Grow</NavSection>
        </Sidebar>

        <Main>
          <Content>
            <Title>Advanced settings</Title>
            <Text>
              Manage the availability of your app on different Android devices and platforms, and turn on advanced settings
            </Text>
            <Tabs role="tablist">
              {TABS.map((name) => (
                <Tab key={name} role="tab" $selected={tab === name} aria-selected={tab === name} onClick={() => setTab(name)}>
                  {name}
                </Tab>
              ))}
            </Tabs>
            <Subtitle>Managed Google Play</Subtitle>
            <Text>
              Use Play Console to publish private apps, manage tracks availability, and upload external APKs.{' '}
              <Link href="#">Learn more</Link>
            </Text>
            <RadioGroup role="radiogroup" aria-label="Managed Google Play">
              {OPTIONS.map(({ value, label, hint }) => (
                <RadioRow key={value}>
                  <Radio type="radio" name="managed" checked={mode === value} onChange={() => setMode(value)} />
                  <span>{label}</span>
                  <RadioHint>{hint}</RadioHint>
                </RadioRow>
              ))}
            </RadioGroup>
          </Content>
          <Footer>
            <span>© 2024 Google</span>
            {FOOTER_LINKS.map((name) => (
              <React.Fragment key={name}>
                <span>·</span>
                <Link href="#" $color="#5f6368">
                  {name}
                </Link>
              </React.Fragment>
            ))}
          </Footer>
        </Main>
        <ScrollArrow />
        <MouseCursor width="16" height="26" viewBox="0 0 16 26">
          <path d="M1 1v20l4.500-4 3.500 7 3-1.500L9 16h6z" fill="#fff" stroke="#222" strokeWidth="1.200" />
        </MouseCursor>
      </Body>

      <ActionBar>
        <ActionButton disabled>Discard</ActionButton>
        <ActionButton disabled $filled>
          Save
        </ActionButton>
      </ActionBar>
      <Taskbar />
    </Screen>
  );
};

export default App;
